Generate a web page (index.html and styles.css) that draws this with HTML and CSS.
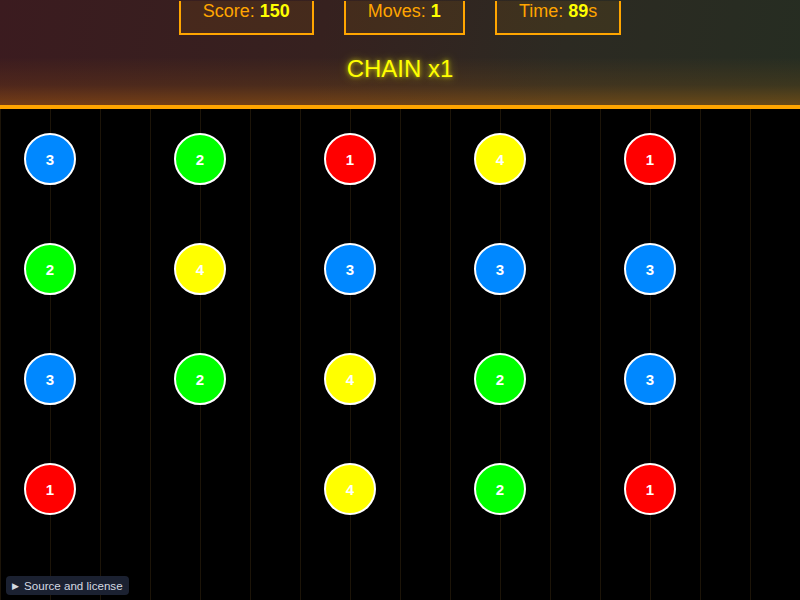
FILE: index.html
```html
<!DOCTYPE html>
<html>
<head>
<meta charset="utf-8">
<link rel="stylesheet" href="styles.css">
</head>
<body>
<header class="hud">
  <div class="stats">
    <div class="stat">Score: <b>150</b></div>
    <div class="stat">Moves: <b>1</b></div>
    <div class="stat">Time: <b>89</b>s</div>
  </div>
  <div class="chain">CHAIN x1</div>
</header>
<main class="board">
  <div class="cell"><span class="dot blue">3</span></div>
  <div class="cell"><span class="dot green">2</span></div>
  <div class="cell"><span class="dot red">1</span></div>
  <div class="cell"><span class="dot yellow">4</span></div>
  <div class="cell"><span class="dot red">1</span></div>

  <div class="cell"><span class="dot green">2</span></div>
  <div class="cell"><span class="dot yellow">4</span></div>
  <div class="cell"><span class="dot blue">3</span></div>
  <div class="cell"><span class="dot blue">3</span></div>
  <div class="cell"><span class="dot blue">3</span></div>

  <div class="cell"><span class="dot blue">3</span></div>
  <div class="cell"><span class="dot green">2</span></div>
  <div class="cell"><span class="dot yellow">4</span></div>
  <div class="cell"><span class="dot green">2</span></div>
  <div class="cell"><span class="dot blue">3</span></div>

  <div class="cell"><span class="dot red">1</span></div>
  <div class="cell"></div>
  <div class="cell"><span class="dot yellow">4</span></div>
  <div class="cell"><span class="dot green">2</span></div>
  <div class="cell"><span class="dot red">1</span></div>
</main>
<div class="source"><span class="tri">▶</span>Source and license</div>
</body>
</html>
```
FILE: styles.css
```css
html, body {
  margin: 0;
  padding: 0;
  height: 100%;
  overflow: hidden;
}
body {
  background-color: #000;
  background-image: repeating-linear-gradient(to right, #1c1408 0, #1c1408 1px, transparent 1px, transparent 50px);
  font-family: "Liberation Sans", Arial, sans-serif;
}
.hud {
  height: 104px;
  padding-top: 1px;
  border-bottom: 4px solid #ffa500;
  background:
    linear-gradient(to top, rgba(255, 140, 0, 0.3) 0, rgba(255, 140, 0, 0.1) 20px, rgba(255, 140, 0, 0) 48px),
    linear-gradient(100deg, #3b1b1f 0%, #36211f 40%, #2c2a22 70%, #262d22 100%);
}
.stats {
  display: flex;
  justify-content: center;
  gap: 30px;
}
.stat {
  border: 2px solid #ffa500;
  border-top: none;
  padding: 0 22px 11px;
  color: #ffa500;
  font-size: 18px;
  line-height: 21px;
  background: rgba(255, 165, 0, 0.08);
}
.stat b {
  color: #ffff00;
}
.chain {
  margin-top: 20px;
  text-align: center;
  color: #ffff00;
  font-size: 24px;
  line-height: 27px;
  text-shadow: 0 0 4px rgba(255, 255, 0, 0.6), 0 0 10px rgba(255, 255, 0, 0.5);
}
.board {
  display: grid;
  grid-template-columns: repeat(5, 100px);
  grid-auto-rows: 100px;
  column-gap: 50px;
  row-gap: 10px;
}
.cell {
  display: flex;
  align-items: center;
  justify-content: center;
}
.dot {
  width: 52px;
  height: 52px;
  box-sizing: border-box;
  border: 2px solid #fff;
  border-radius: 50%;
  display: flex;
  align-items: center;
  justify-content: center;
  color: #fff;
  font-weight: bold;
  font-size: 15px;
}
.blue { background: #0088ff; }
.green { background: #00ff00; }
.red { background: #ff0000; }
.yellow { background: #ffff00; }
.source {
  position: fixed;
  left: 6px;
  bottom: 5px;
  height: 19px;
  width: 123px;
  box-sizing: border-box;
  padding-left: 6px;
  display: flex;
  align-items: center;
  background: #1b2131;
  border-radius: 4px;
  color: #d4d9e2;
  font-size: 11.6px;
}
.tri {
  font-size: 9px;
  margin-right: 5px;
}
```
